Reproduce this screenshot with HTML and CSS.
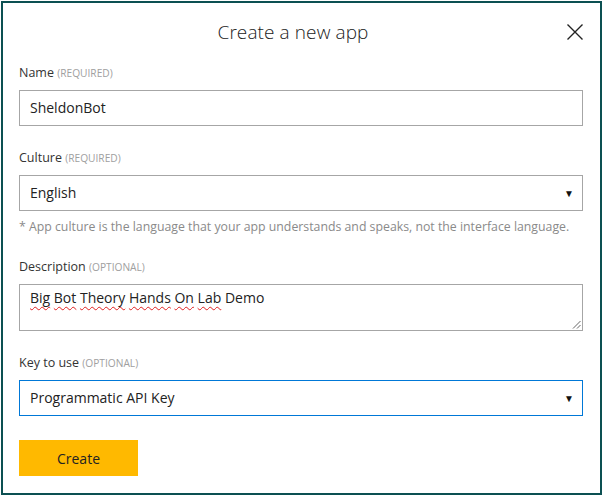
FILE: index.html
```html
<!DOCTYPE html>
<html lang="en">
<head>
<meta charset="utf-8">
<title>Create a new app</title>
<link rel="stylesheet" href="styles.css">
</head>
<body>
<div class="dialog">
  <div class="header">
    <span></span>
    <h1 class="title">Create a new app</h1>
    <button class="close" aria-label="Close">
      <svg width="16" height="16" viewBox="0 0 16 16"><path d="M0.5 0.5 L15.5 15.5 M15.5 0.5 L0.5 15.5" stroke="#222" stroke-width="1.4" fill="none"/></svg>
    </button>
  </div>

  <div class="field first">
    <div class="label">Name <span class="hint">(REQUIRED)</span></div>
    <div class="input">SheldonBot</div>
  </div>

  <div class="field">
    <div class="label">Culture <span class="hint">(REQUIRED)</span></div>
    <div class="input select"><span>English</span><span class="arrow">&#9660;</span></div>
    <div class="note">* App culture is the language that your app understands and speaks, not the interface language.</div>
  </div>

  <div class="field desc">
    <div class="label">Description <span class="hint">(OPTIONAL)</span></div>
    <div class="input textarea"><span class="sp">Big</span> <span class="sp">Bot</span> <span class="sp">Theory</span> <span class="sp">Hands</span> <span class="sp">On</span> <span class="sp">Lab</span> Demo
      <svg class="grip" width="9" height="9" viewBox="0 0 9 9"><path d="M8.5 1 L1 8.5 M8.5 5 L5 8.5" stroke="#666" stroke-width="1" fill="none"/></svg>
    </div>
  </div>

  <div class="field key">
    <div class="label">Key to use <span class="hint">(OPTIONAL)</span></div>
    <div class="input select focused"><span>Programmatic API Key</span><span class="arrow">&#9660;</span></div>
  </div>

  <button class="create">Create</button>
</div>
</body>
</html>
```
FILE: styles.css
```css
html, body {
  margin: 0;
  padding: 0;
  background: #ffffff;
}
body {
  font-family: "Open Sans", "Noto Sans", "Liberation Sans", sans-serif;
  color: #222;
}
.dialog {
  margin: 1px;
  width: 601px;
  height: 494px;
  box-sizing: border-box;
  border: 2px solid #0c5052;
  padding: 0 17px 0 16px;
}
.header {
  height: 58px;
  display: grid;
  grid-template-columns: 1fr auto 1fr;
  align-items: center;
}
.title {
  margin: 0 0 0 -16px;
  font-size: 19px;
  font-weight: 300;
  line-height: 28px;
  color: #222;
  letter-spacing: 0.1px;
}
.close {
  justify-self: end;
  background: none;
  border: 0;
  padding: 0;
  margin-right: 0;
  width: 16px;
  height: 16px;
  display: flex;
}
.field {
  margin-top: 22px;
}
.field.first {
  margin-top: 2px;
}
.label {
  height: 19px;
  font-size: 12.5px;
  line-height: 19px;
  color: #333;
  margin-bottom: 8px;
}
.hint {
  font-size: 10.2px;
  line-height: 1;
  color: #a0a0a0;
}
.input {
  height: 36px;
  box-sizing: border-box;
  border: 1px solid #a6a6a6;
  padding: 0 10px;
  font-size: 14px;
  line-height: 34px;
  color: #222;
}
.select {
  display: flex;
  justify-content: space-between;
  align-items: center;
}
.arrow {
  font-size: 10px;
  line-height: 1;
  color: #111;
  margin-right: -2px;
}
.focused {
  border-color: #0078d7;
}
.note {
  margin-top: 7px;
  height: 18px;
  font-size: 12.3px;
  line-height: 18px;
  color: #8a8a8a;
}
.field.desc {
  margin-top: 21px;
}
.textarea {
  position: relative;
  height: 47px;
  line-height: 26px;
  padding-top: 0;
}
.sp {
  text-decoration: underline wavy #e02020;
  text-decoration-thickness: 1px;
  text-underline-offset: 3px;
}
.grip {
  position: absolute;
  right: 1px;
  bottom: 1px;
}
.create {
  margin-top: 24px;
  width: 119px;
  height: 36px;
  border: 0;
  background: #ffb900;
  font-family: inherit;
  font-size: 14px;
  color: #222;
  padding: 0;
}
```
